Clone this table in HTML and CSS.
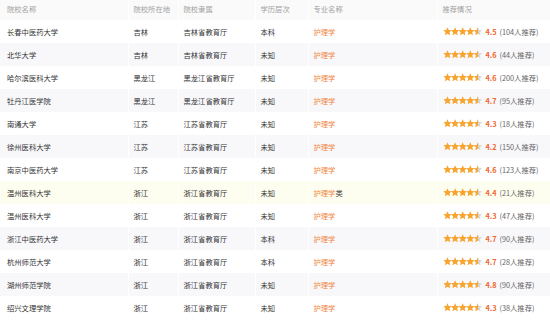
FILE: index.html
```html
<!DOCTYPE html>
<html lang="zh-CN">
<head>
<meta charset="utf-8">
<title>院校列表</title>
<link rel="stylesheet" href="styles.css">
</head>
<body>
<svg class="defs" width="0" height="0" aria-hidden="true">
  <defs>
    <symbol id="star" viewBox="0 0 9 9">
      <polygon points="4.5,0.2 5.73,3 8.78,3.31 6.5,5.35 7.15,8.34 4.5,6.8 1.85,8.34 2.5,5.35 0.22,3.31 3.27,3"/>
    </symbol>
    <linearGradient id="half" x1="0" x2="1" y1="0" y2="0">
      <stop offset="50%" stop-color="#f7a531"/>
      <stop offset="50%" stop-color="#d6d6d6"/>
    </linearGradient>
  </defs>
</svg>
<table class="list">
  <colgroup>
    <col class="c1"><col class="c2"><col class="c3"><col class="c4"><col class="c5"><col class="c6">
  </colgroup>
  <thead>
    <tr><th>院校名称</th><th>院校所在地</th><th>院校隶属</th><th>学历层次</th><th>专业名称</th><th>推荐情况</th></tr>
  </thead>
  <tbody>
    <tr><td>长春中医药大学</td><td>吉林</td><td>吉林省教育厅</td><td>本科</td><td><span class="hl">护理学</span></td><td><svg class="stars" viewBox="0 0 39 9"><use href="#star" x="0" width="9" height="9"/><use href="#star" x="7.6" width="9" height="9"/><use href="#star" x="15.2" width="9" height="9"/><use href="#star" x="22.8" width="9" height="9"/><use href="#star" x="30.4" width="9" height="9" class="half"/></svg><b>4.5</b><span class="cnt">(104人推荐)</span></td></tr>
    <tr><td>北华大学</td><td>吉林</td><td>吉林省教育厅</td><td>未知</td><td><span class="hl">护理学</span></td><td><svg class="stars" viewBox="0 0 39 9"><use href="#star" x="0" width="9" height="9"/><use href="#star" x="7.6" width="9" height="9"/><use href="#star" x="15.2" width="9" height="9"/><use href="#star" x="22.8" width="9" height="9"/><use href="#star" x="30.4" width="9" height="9" class="half"/></svg><b>4.6</b><span class="cnt">(44人推荐)</span></td></tr>
    <tr><td>哈尔滨医科大学</td><td>黑龙江</td><td>黑龙江省教育厅</td><td>未知</td><td><span class="hl">护理学</span></td><td><svg class="stars" viewBox="0 0 39 9"><use href="#star" x="0" width="9" height="9"/><use href="#star" x="7.6" width="9" height="9"/><use href="#star" x="15.2" width="9" height="9"/><use href="#star" x="22.8" width="9" height="9"/><use href="#star" x="30.4" width="9" height="9" class="half"/></svg><b>4.6</b><span class="cnt">(200人推荐)</span></td></tr>
    <tr><td>牡丹江医学院</td><td>黑龙江</td><td>黑龙江省教育厅</td><td>未知</td><td><span class="hl">护理学</span></td><td><svg class="stars" viewBox="0 0 39 9"><use href="#star" x="0" width="9" height="9"/><use href="#star" x="7.6" width="9" height="9"/><use href="#star" x="15.2" width="9" height="9"/><use href="#star" x="22.8" width="9" height="9"/><use href="#star" x="30.4" width="9" height="9" class="half"/></svg><b>4.7</b><span class="cnt">(95人推荐)</span></td></tr>
    <tr><td>南通大学</td><td>江苏</td><td>江苏省教育厅</td><td>未知</td><td><span class="hl">护理学</span></td><td><svg class="stars" viewBox="0 0 39 9"><use href="#star" x="0" width="9" height="9"/><use href="#star" x="7.6" width="9" height="9"/><use href="#star" x="15.2" width="9" height="9"/><use href="#star" x="22.8" width="9" height="9"/><use href="#star" x="30.4" width="9" height="9" class="half"/></svg><b>4.3</b><span class="cnt">(18人推荐)</span></td></tr>
    <tr><td>徐州医科大学</td><td>江苏</td><td>江苏省教育厅</td><td>未知</td><td><span class="hl">护理学</span></td><td><svg class="stars" viewBox="0 0 39 9"><use href="#star" x="0" width="9" height="9"/><use href="#star" x="7.6" width="9" height="9"/><use href="#star" x="15.2" width="9" height="9"/><use href="#star" x="22.8" width="9" height="9"/><use href="#star" x="30.4" width="9" height="9" class="half"/></svg><b>4.2</b><span class="cnt">(150人推荐)</span></td></tr>
    <tr><td>南京中医药大学</td><td>江苏</td><td>江苏省教育厅</td><td>未知</td><td><span class="hl">护理学</span></td><td><svg class="stars" viewBox="0 0 39 9"><use href="#star" x="0" width="9" height="9"/><use href="#star" x="7.6" width="9" height="9"/><use href="#star" x="15.2" width="9" height="9"/><use href="#star" x="22.8" width="9" height="9"/><use href="#star" x="30.4" width="9" height="9" class="half"/></svg><b>4.6</b><span class="cnt">(123人推荐)</span></td></tr>
    <tr class="hover"><td>温州医科大学</td><td>浙江</td><td>浙江省教育厅</td><td>未知</td><td><span class="hl">护理学</span>类</td><td><svg class="stars" viewBox="0 0 39 9"><use href="#star" x="0" width="9" height="9"/><use href="#star" x="7.6" width="9" height="9"/><use href="#star" x="15.2" width="9" height="9"/><use href="#star" x="22.8" width="9" height="9"/><use href="#star" x="30.4" width="9" height="9" class="half"/></svg><b>4.4</b><span class="cnt">(21人推荐)</span></td></tr>
    <tr><td>温州医科大学</td><td>浙江</td><td>浙江省教育厅</td><td>未知</td><td><span class="hl">护理学</span></td><td><svg class="stars" viewBox="0 0 39 9"><use href="#star" x="0" width="9" height="9"/><use href="#star" x="7.6" width="9" height="9"/><use href="#star" x="15.2" width="9" height="9"/><use href="#star" x="22.8" width="9" height="9"/><use href="#star" x="30.4" width="9" height="9" class="half"/></svg><b>4.3</b><span class="cnt">(47人推荐)</span></td></tr>
    <tr><td>浙江中医药大学</td><td>浙江</td><td>浙江省教育厅</td><td>本科</td><td><span class="hl">护理学</span></td><td><svg class="stars" viewBox="0 0 39 9"><use href="#star" x="0" width="9" height="9"/><use href="#star" x="7.6" width="9" height="9"/><use href="#star" x="15.2" width="9" height="9"/><use href="#star" x="22.8" width="9" height="9"/><use href="#star" x="30.4" width="9" height="9" class="half"/></svg><b>4.7</b><span class="cnt">(90人推荐)</span></td></tr>
    <tr><td>杭州师范大学</td><td>浙江</td><td>浙江省教育厅</td><td>本科</td><td><span class="hl">护理学</span></td><td><svg class="stars" viewBox="0 0 39 9"><use href="#star" x="0" width="9" height="9"/><use href="#star" x="7.6" width="9" height="9"/><use href="#star" x="15.2" width="9" height="9"/><use href="#star" x="22.8" width="9" height="9"/><use href="#star" x="30.4" width="9" height="9" class="half"/></svg><b>4.7</b><span class="cnt">(28人推荐)</span></td></tr>
    <tr><td>湖州师范学院</td><td>浙江</td><td>浙江省教育厅</td><td>未知</td><td><span class="hl">护理学</span></td><td><svg class="stars" viewBox="0 0 39 9"><use href="#star" x="0" width="9" height="9"/><use href="#star" x="7.6" width="9" height="9"/><use href="#star" x="15.2" width="9" height="9"/><use href="#star" x="22.8" width="9" height="9"/><use href="#star" x="30.4" width="9" height="9" class="half"/></svg><b>4.8</b><span class="cnt">(90人推荐)</span></td></tr>
    <tr><td>绍兴文理学院</td><td>浙江</td><td>浙江省教育厅</td><td>未知</td><td><span class="hl">护理学</span></td><td><svg class="stars" viewBox="0 0 39 9"><use href="#star" x="0" width="9" height="9"/><use href="#star" x="7.6" width="9" height="9"/><use href="#star" x="15.2" width="9" height="9"/><use href="#star" x="22.8" width="9" height="9"/><use href="#star" x="30.4" width="9" height="9" class="half"/></svg><b>4.3</b><span class="cnt">(38人推荐)</span></td></tr>
  </tbody>
</table>
</body>
</html>
```
FILE: styles.css
```css
html, body {
  margin: 0;
  padding: 0;
  background: #fff;
}
body {
  font-family: "Noto Sans CJK SC", "Noto Sans", sans-serif;
  font-size: 7.3px;
  color: #333;
  overflow: hidden;
}
.defs {
  display: block;
  width: 0;
  height: 0;
}
.list {
  width: 550px;
  border-collapse: collapse;
  table-layout: fixed;
}
.c1 { width: 128px; }
.c2 { width: 50px; }
.c3 { width: 77px; }
.c4 { width: 53px; }
.c5 { width: 129px; }
.c6 { width: 113px; }
.list th,
.list td {
  padding: 0 0 0 5px;
  text-align: left;
  white-space: nowrap;
  border-left: 1px solid #fff;
  line-height: 10px;
}
.list th:first-child,
.list td:first-child {
  padding-left: 7px;
  border-left: 0;
}
.list th {
  height: 20px;
  font-weight: normal;
  color: #a0a0a0;
  background: #fafafa;
  vertical-align: top;
  padding-top: 4px;
  box-sizing: border-box;
}
.list td {
  height: 23px;
  vertical-align: middle;
}
.list tbody tr:nth-child(even) td {
  background: #f8f8fb;
}
.list tbody tr.hover td {
  background: #fefef0;
}
.hl {
  color: #f0843c;
}
.stars {
  width: 39px;
  height: 9px;
  fill: #f7a531;
  vertical-align: -1.5px;
  margin-right: 4px;
}
.stars .half {
  fill: url(#half);
}
.list b {
  color: #f0662c;
  font-weight: bold;
  margin-right: 3px;
}
.cnt {
  color: #666;
}
```
